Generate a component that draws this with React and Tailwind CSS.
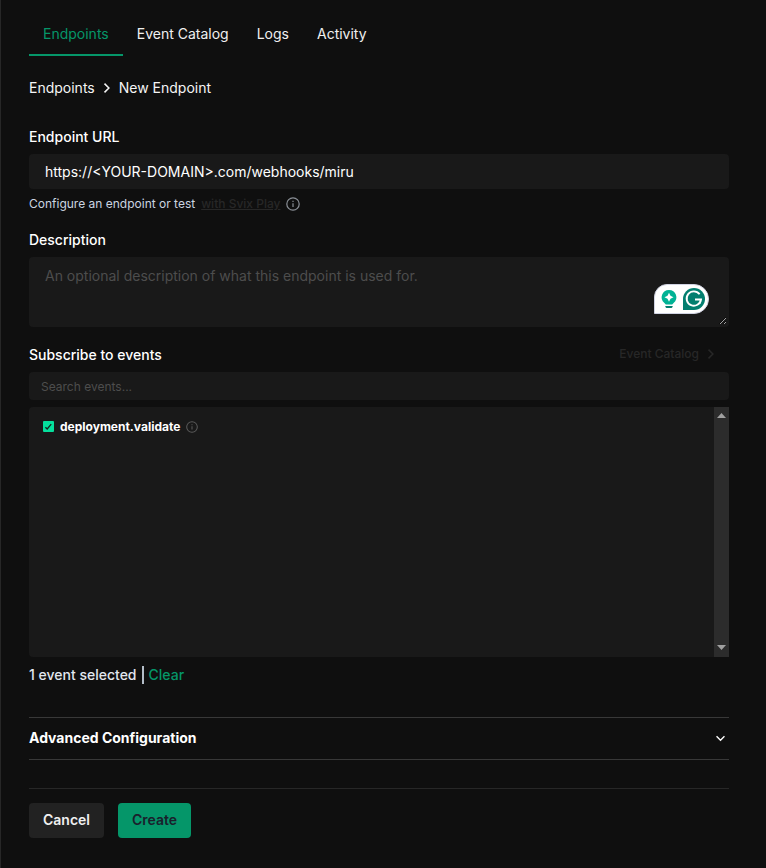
import { useState } from 'react'

const TABS = ['Endpoints', 'Event Catalog', 'Logs', 'Activity']
const EVENTS = ['deployment.validate']

export default function App() {
  const [tab, setTab] = useState('Endpoints')
  const [url, setUrl] = useState('https://<YOUR-DOMAIN>.com/webhooks/miru')
  const [description, setDescription] = useState('')
  const [search, setSearch] = useState('')
  const [selected, setSelected] = useState(['deployment.validate'])

  const toggle = (name) => {
    setSelected(selected.includes(name) ? selected.filter((n) => n !== name) : [...selected, name])
  }

  return (
    <div className="min-h-screen border-l border-[#272727] bg-[#0f0f0f] pl-7 pr-[37px] pb-7 font-['Inter',sans-serif] text-[14px] leading-5 text-[#f5f5f5]">
      {/* Tabs */}
      <nav className="flex pt-2">
        {TABS.map((name) => (
          <TabBtn key={name} active={tab === name} onClick={() => setTab(name)}>{name}</TabBtn>
        ))}
      </nav>

      {/* Breadcrumb */}
      <div className="mt-[22px] flex items-center">
        <a href="#endpoints">Endpoints</a>
        <Chevron className="mx-[7px] h-[10px] w-[10px] -rotate-90" />
        <span>New Endpoint</span>
      </div>

      <form className="mt-[29px]" onSubmit={(e) => e.preventDefault()}>
        <label htmlFor="url" className="block font-medium text-white">Endpoint URL</label>
        <input
          id="url"
          value={url}
          onChange={(e) => setUrl(e.target.value)}
          className="mt-[7px] block h-[35px] w-full rounded bg-[#191919] px-4 text-white outline-none"
        />
        <div className="mt-[5px] flex items-center text-[12px] text-[#cbd5e0]">
          <span>Configure an endpoint or test</span>
          <a href="#play" className="mx-[6px] font-medium text-[#272727] underline">with Svix Play</a>
          <InfoIcon className="h-[14px] w-[14px] text-[#8a8f96]" />
        </div>

        <label htmlFor="description" className="mt-4 block font-medium text-white">Description</label>
        <div className="relative mt-[7px]">
          <textarea
            id="description"
            value={description}
            onChange={(e) => setDescription(e.target.value)}
            placeholder="An optional description of what this endpoint is used for."
            className="block h-[70px] w-full resize-y rounded border-2 border-transparent bg-[#191919] px-[14px] py-[7px] text-white outline-none placeholder:text-[#4d4d4d]"
          />
          <WritingBadge />
        </div>

        <div className="mt-[18px] flex items-start justify-between">
          <label htmlFor="search" className="font-medium text-white">Subscribe to events</label>
          <a href="#catalog" className="mr-[13px] flex items-center gap-[7px] text-[12px] leading-[18px] font-medium text-[#272727]">
            Event Catalog
            <Chevron className="h-[10px] w-[10px] -rotate-90" />
          </a>
        </div>
        <input
          id="search"
          value={search}
          onChange={(e) => setSearch(e.target.value)}
          placeholder="Search events..."
          className="mt-[7px] block h-7 w-full rounded bg-[#191919] px-3 text-[12px] text-white outline-none placeholder:text-[#4d4d4d]"
        />

        {/* Event list */}
        <div className="mt-[7px] flex h-[250px] overflow-hidden rounded-l bg-[#191919]">
          <ul className="flex-1 px-[14px] py-[10px]">
            {EVENTS.filter((name) => name.includes(search)).map((name) => (
              <li key={name} className="flex items-center text-[12px] font-bold text-white">
                <label className="flex items-center gap-[6px]">
                  <span className="relative mb-px flex">
                    <input
                      type="checkbox"
                      checked={selected.includes(name)}
                      onChange={() => toggle(name)}
                      className="peer h-[11px] w-[11px] appearance-none rounded-[1px] border border-[#4d4d4d] checked:border-0 checked:bg-[#05df9c]"
                    />
                    <svg viewBox="0 0 11 11" className="pointer-events-none absolute inset-0 hidden h-[11px] w-[11px] peer-checked:block" fill="none" stroke="#12251f" strokeWidth="1.3">
                      <path d="M2.4 6.2l1.8 1.8L8.2 3.2" />
                    </svg>
                  </span>
                  {name}
                </label>
                <InfoIcon className="ml-[6px] h-3 w-3 text-[#5c5c5c]" />
              </li>
            ))}
          </ul>
          <div className="flex w-[15px] flex-col items-center justify-between bg-[#2c2c2c] pt-[6px] pb-[7px]">
            <svg viewBox="0 0 9 5" className="h-[5px] w-[9px]" fill="#a0a0a0"><path d="M0 5L4.5 0L9 5z" /></svg>
            <svg viewBox="0 0 9 5" className="h-[5px] w-[9px]" fill="#a0a0a0"><path d="M0 0L4.5 5L9 0z" /></svg>
          </div>
        </div>

        <div className="mt-2 flex items-center font-medium text-[#e2e8f0]">
          <span>{selected.length} event selected</span>
          <span className="mx-[5px] h-[18px] w-[2px] bg-[#b4bdc8]" />
          <button type="button" onClick={() => setSelected([])} className="text-[#059669]">Clear</button>
        </div>

        <button type="button" className="mt-8 flex h-[43px] w-full items-center justify-between border-y border-[#383838] pr-1 pb-[2px] font-bold text-white">
          Advanced Configuration
          <Chevron className="mt-[2px] h-[9px] w-[9px]" />
        </button>

        <div className="mt-7 flex gap-[14px] border-t border-[#272727] pt-[14px]">
          <button type="button" className="h-[35px] rounded bg-[#222222] px-[14px] pb-[2px] font-semibold text-[#f0f0f0]">Cancel</button>
          <button type="submit" className="h-[35px] rounded bg-[#059669] px-[14px] pb-[2px] font-semibold text-[#1a202c]">Create</button>
        </div>
      </form>
    </div>
  )
}

function TabBtn({ children, onClick, active }) {
  return (
    <button onClick={onClick} className={`h-12 border-b-2 px-[14px] pt-[6px] ${active ? 'border-[#059669] text-[#059669]' : 'border-transparent text-[#f0f0f0]'}`}>
      {children}
    </button>
  )
}

function Chevron({ className }) {
  return (
    <svg viewBox="0 0 10 10" className={className} fill="none" stroke="currentColor" strokeWidth="1.5">
      <path d="M0.6 2.5L5 6.9L9.4 2.5" />
    </svg>
  )
}

function InfoIcon({ className }) {
  return (
    <svg viewBox="0 0 14 14" className={className} fill="none" stroke="currentColor" strokeWidth="1.2">
      <circle cx="7" cy="7" r="6.2" />
      <path d="M7 6.2V10M7 3.8V5.1" />
    </svg>
  )
}

// floating writing assistant pill inside the textarea
function WritingBadge() {
  return (
    <svg viewBox="0 0 55 30" className="absolute right-5 top-[27px] h-[30px] w-[55px]" fill="none">
      <path d="M0.5 29.5V13A12.5 12.5 0 0 1 13 0.5H40A14.5 14.5 0 0 1 40 29.5Z" fill="#fff" stroke="#d0d3e2" />
      <path d="M15 6a7.3 7.3 0 0 0-4.6 13l1.4 1.6h6.4l1.4-1.6A7.3 7.3 0 0 0 15 6z" fill="#00b295" />
      <path d="M15 8.8l1.5 3 3 1.5-3 1.5-1.5 3-1.5-3-3-1.5 3-1.5z" fill="#fff" />
      <path d="M11.3 22h7.4c0 1.5-.8 2-1.8 2h-3.8c-1 0-1.8-.5-1.8-2z" fill="#027e6f" />
      <path d="M29 26V15A11 11 0 1 1 40 26z" fill="#027e6f" />
      <path d="M45.6 10.2A7.2 7.2 0 1 0 47 15.5H41M47 15.5L45.6 19.8" stroke="#fff" strokeWidth="1.9" />
    </svg>
  )
}
